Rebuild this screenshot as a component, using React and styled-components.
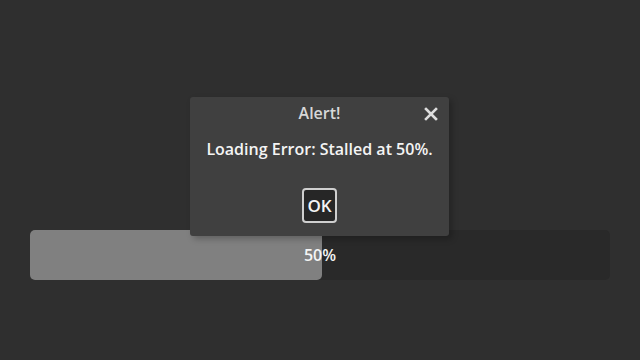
import React from 'react';
import styled, { createGlobalStyle } from 'styled-components';

const GlobalStyle = createGlobalStyle`
  html, body {
    margin: 0;
    padding: 0;
    background-color: #2f2f2f;
    font-family: 'Open Sans', 'Noto Sans', sans-serif;
  }
`;

const Page = styled.div`
  position: relative;
  width: 640px;
  height: 360px;
  display: flex;
  flex-direction: column;
  justify-content: flex-start;
  padding: 230px 30px 0 30px;
  box-sizing: border-box;
`;

const Track = styled.div`
  position: relative;
  width: 100%;
  height: 50px;
  background-color: #292929;
  border-radius: 5px;
  display: flex;
`;

const Fill = styled.div`
  height: 100%;
  background-color: #808080;
  border-radius: 5px;
`;

const Percent = styled.div`
  position: absolute;
  inset: 0;
  display: flex;
  align-items: center;
  justify-content: center;
  color: #f4f4f4;
  font-size: 16px;
  font-weight: 600;
`;

const Dialog = styled.div`
  position: absolute;
  top: 97px;
  left: 190px;
  width: 259px;
  height: 139px;
  background-color: #404040;
  border-radius: 3px;
  box-shadow: 3px 3px 6px rgba(0, 0, 0, 0.25);
  display: flex;
  flex-direction: column;
  align-items: center;
  box-sizing: border-box;
  padding-top: 4px;
`;

const TitleRow = styled.div`
  position: relative;
  width: 100%;
  height: 24px;
  display: flex;
  align-items: center;
  justify-content: center;
  color: #d8d8d8;
  font-size: 16px;
  font-weight: 600;
`;

const CloseButton = styled.button`
  position: absolute;
  right: 8px;
  top: 3px;
  width: 20px;
  height: 20px;
  padding: 0;
  background: none;
  border: none;
  display: flex;
  align-items: center;
  justify-content: center;
  cursor: pointer;
`;

const Message = styled.div`
  margin-top: 13px;
  color: #f4f4f4;
  font-size: 16px;
  font-weight: 600;
`;

const OkButton = styled.button`
  margin-top: 28px;
  width: 35px;
  height: 35px;
  background-color: #262626;
  color: #f4f4f4;
  border: 2px solid #cfcfcf;
  border-radius: 4px;
  font-family: 'Open Sans', 'Noto Sans', sans-serif;
  font-size: 17px;
  font-weight: 600;
  padding: 0;
  cursor: pointer;
`;

const App = () => {
  const progress = 50;

  return (
    <>
      <GlobalStyle />
      <Page>
        <Track>
          <Fill style={{ width: `calc(${progress}% + 2px)` }} />
          <Percent>{progress}%</Percent>
        </Track>
        <Dialog>
          <TitleRow>
            Alert!
            <CloseButton aria-label="close">
              <svg width="14" height="14" viewBox="0 0 14 14">
                <path d="M2 2 L12 12 M12 2 L2 12" stroke="#dddddd" strokeWidth="2.6" strokeLinecap="square" />
              </svg>
            </CloseButton>
          </TitleRow>
          <Message>Loading Error: Stalled at 50%.</Message>
          <OkButton>OK</OkButton>
        </Dialog>
      </Page>
    </>
  );
};

export default App;
